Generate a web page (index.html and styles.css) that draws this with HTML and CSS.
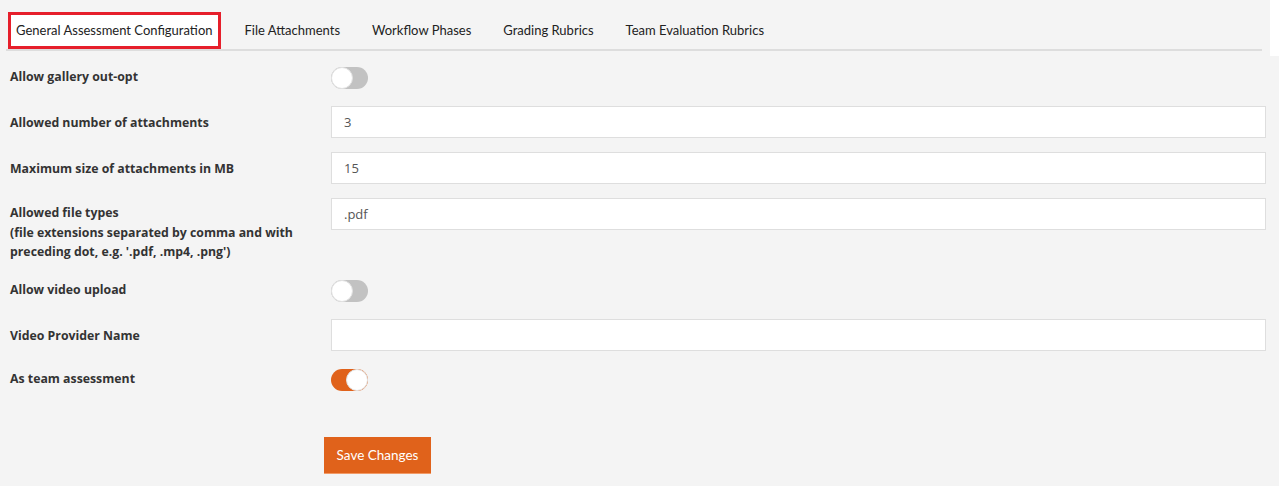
FILE: index.html
```html
<!DOCTYPE html>
<html lang="en">
<head>
<meta charset="utf-8">
<title>Assessment Configuration</title>
<link rel="stylesheet" href="styles.css">
</head>
<body>
<div class="page">
  <div class="tabs-wrap">
    <ul class="tabs">
      <li class="tab active">General Assessment Configuration</li>
      <li class="tab">File Attachments</li>
      <li class="tab">Workflow Phases</li>
      <li class="tab">Grading Rubrics</li>
      <li class="tab">Team Evaluation Rubrics</li>
    </ul>
  </div>
  <form class="panel">
    <div class="row row-toggle">
      <label class="label">Allow gallery out-opt</label>
      <div class="field"><span class="toggle"><span class="knob"></span></span></div>
    </div>
    <div class="row">
      <label class="label">Allowed number of attachments</label>
      <div class="field"><div class="input">3</div></div>
    </div>
    <div class="row">
      <label class="label">Maximum size of attachments in MB</label>
      <div class="field"><div class="input">15</div></div>
    </div>
    <div class="row">
      <label class="label label-multi">Allowed file types<br>(file extensions separated by comma and with preceding dot, e.g. '.pdf, .mp4, .png')</label>
      <div class="field"><div class="input">.pdf</div></div>
    </div>
    <div class="row row-toggle">
      <label class="label">Allow video upload</label>
      <div class="field"><span class="toggle"><span class="knob"></span></span></div>
    </div>
    <div class="row">
      <label class="label">Video Provider Name</label>
      <div class="field"><div class="input"></div></div>
    </div>
    <div class="row row-toggle">
      <label class="label">As team assessment</label>
      <div class="field"><span class="toggle on"><span class="knob"></span></span></div>
    </div>
    <div class="actions">
      <button type="button" class="btn">Save Changes</button>
    </div>
  </form>
</div>
</body>
</html>
```

FILE: styles.css
```css
html, body {
  margin: 0;
  padding: 0;
  background: #ffffff;
}
body {
  font-family: "Open Sans", "Liberation Sans", sans-serif;
  color: #333;
}
.page {
  width: 1279px;
  height: 486px;
  display: flex;
  flex-direction: column;
}
.tabs-wrap {
  width: 1270px;
  height: 56px;
  background: #f4f4f4;
  box-sizing: border-box;
  padding: 12px 8px 0 6px;
  flex: none;
}
.tabs {
  list-style: none;
  margin: 0;
  padding: 0 0 0 2px;
  display: flex;
  gap: 16px;
  border-bottom: 2px solid #dddddd;
  height: 39px;
  box-sizing: border-box;
}
.tab {
  font-family: "Lato", "Open Sans", sans-serif;
  font-size: 13px;
  color: #222;
  height: 37px;
  box-sizing: border-box;
  padding: 0 5px 2px;
  border: 3px solid transparent;
  display: flex;
  align-items: center;
}
.tab.active {
  border-color: #e61f2b;
  background: #ffffff;
}
.panel {
  flex: 1;
  background: #f4f4f4;
  margin: 0;
  padding: 7px 13px 0 10px;
}
.row {
  display: grid;
  grid-template-columns: 321px 1fr;
  margin-bottom: 14px;
  min-height: 32px;
}
.row-toggle {
  min-height: 29px;
}
.label {
  font-weight: 700;
  font-size: 12.3px;
  line-height: 18.5px;
  color: #333;
  padding-top: 8px;
}
.label-multi {
  padding-top: 5px;
  line-height: 19.5px;
}
.row-toggle .label {
  padding-top: 5px;
}
.field {
  display: flex;
  align-items: flex-start;
}
.input {
  width: 100%;
  height: 32px;
  box-sizing: border-box;
  background: #fff;
  border: 1px solid #dedede;
  padding: 0 12px;
  font-size: 13px;
  color: #555;
  line-height: 30px;
}
.toggle {
  margin-top: 4px;
  width: 37px;
  height: 22px;
  border-radius: 11px;
  background: #c2c2c2;
  position: relative;
  display: block;
}
.toggle .knob {
  position: absolute;
  top: 0;
  left: 0;
  width: 22px;
  height: 22px;
  box-sizing: border-box;
  border-radius: 50%;
  background: #fff;
  border: 1px solid #e2e2e2;
}
.toggle.on {
  background: #e0621b;
}
.toggle.on .knob {
  left: 15px;
}
.actions {
  padding-left: 314px;
  padding-top: 29px;
}
.btn {
  font-family: "Lato", "Open Sans", sans-serif;
  font-size: 13.5px;
  color: #fff;
  background: #e0621b;
  border: none;
  border-bottom: 1px solid #f29a66;
  width: 107px;
  height: 37px;
  padding: 0;
  cursor: pointer;
}
```
